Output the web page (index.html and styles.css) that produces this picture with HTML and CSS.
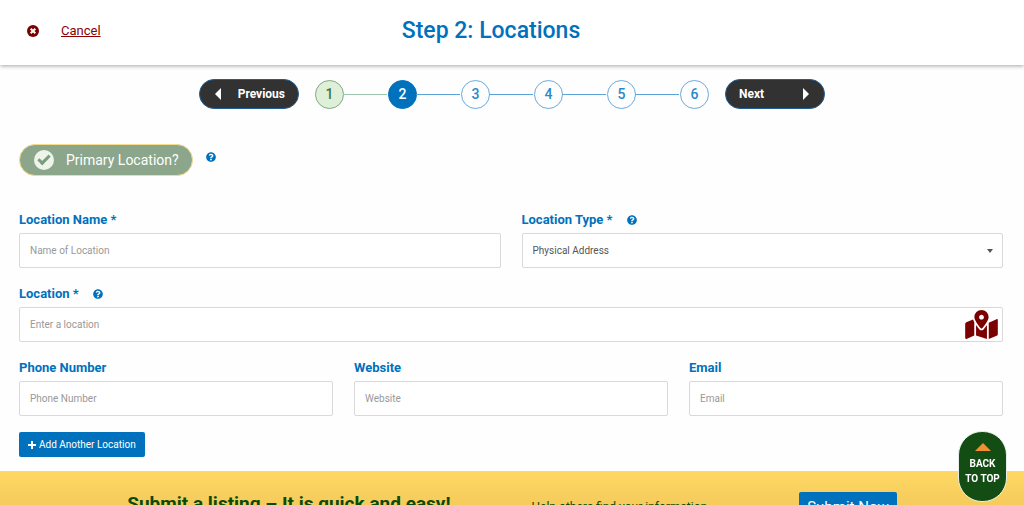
FILE: index.html
```html
<!DOCTYPE html>
<html lang="en">

<head>
    <meta charset="UTF-8">
    <meta name="viewport" content="width=device-width, initial-scale=1.0">
    <title>Step 2: Locations</title>
    <link rel="stylesheet" href="styles.css">
</head>

<body>
    <svg class="sprite" aria-hidden="true">
        <symbol id="icon-help" viewBox="0 0 512 512">
            <path d="M504 256c0 137-111 248-248 248S8 393 8 256 119 8 256 8s248 111 248 248zM262.700 90c-54.500 0-89.300 23-116.500 63.800-3.500 5.300-2.400 12.400 2.700 16.300l34.700 26.300c5.200 3.900 12.600 3 16.700-2.100 17.900-22.700 30.100-35.800 57.300-35.800 20.400 0 45.700 13.100 45.700 33 0 15-12.400 22.700-32.500 34C247 238.500 216 254.900 216 296v4c0 6.600 5.400 12 12 12h56c6.600 0 12-5.400 12-12v-1.300c0-28.500 83.200-29.600 83.200-106.700 0-58-60.200-102-116.500-102zM256 338c-25.400 0-46 20.600-46 46s20.600 46 46 46 46-20.600 46-46-20.600-46-46-46z" />
        </symbol>
    </svg>

    <header class="header">
        <a class="cancel" href="#">
            <svg class="cancel__icon" viewBox="0 0 12 12" aria-hidden="true">
                <circle cx="6" cy="6" r="6" />
                <path d="M3.700 3.700l4.600 4.600M8.300 3.700l-4.600 4.600" />
            </svg>
            <span class="cancel__text">Cancel</span>
        </a>
        <h1 class="header__title">Step 2: Locations</h1>
    </header>

    <nav class="stepper" aria-label="Steps">
        <button class="stepper__button" type="button">
            <svg class="stepper__arrow" viewBox="0 0 6 12" aria-hidden="true"><path d="M6 0v12L0 6z" /></svg>
            Previous
        </button>
        <ol class="steps">
            <li class="step step--done">1</li>
            <li class="step step--active" aria-current="step">2</li>
            <li class="step">3</li>
            <li class="step">4</li>
            <li class="step">5</li>
            <li class="step">6</li>
        </ol>
        <button class="stepper__button" type="button">
            Next
            <svg class="stepper__arrow" viewBox="0 0 6 12" aria-hidden="true"><path d="M0 0v12l6-6z" /></svg>
        </button>
    </nav>

    <main>
        <form class="form">
            <div class="primary">
                <label class="primary__toggle">
                    <input class="primary__check" type="checkbox" checked>
                    Primary Location?
                </label>
                <svg class="help"><use href="#icon-help" /></svg>
            </div>

            <div class="form__row">
                <div class="field">
                    <div class="field__head">
                        <label for="name">Location Name *</label>
                    </div>
                    <input class="field__control" id="name" type="text" placeholder="Name of Location">
                </div>
                <div class="field">
                    <div class="field__head">
                        <label for="type">Location Type *</label>
                        <svg class="help"><use href="#icon-help" /></svg>
                    </div>
                    <div class="field__box">
                        <select class="field__control field__control--select" id="type">
                            <option>Physical Address</option>
                        </select>
                        <span class="field__caret"></span>
                    </div>
                </div>
            </div>

            <div class="form__row">
                <div class="field">
                    <div class="field__head">
                        <label for="location">Location *</label>
                        <svg class="help"><use href="#icon-help" /></svg>
                    </div>
                    <div class="field__box">
                        <input class="field__control" id="location" type="text" placeholder="Enter a location">
                        <svg class="field__map" viewBox="0 0 576 512" aria-hidden="true">
                            <path d="M288 0c-69.600 0-126 56.400-126 126 0 56.300 82.400 158.800 113.900 196 6.400 7.500 17.800 7.500 24.200 0C331.600 284.800 414 182.300 414 126 414 56.400 357.600 0 288 0zm0 168c-23.200 0-42-18.800-42-42s18.800-42 42-42 42 18.800 42 42-18.800 42-42 42zM20.100 216A32 32 0 0 0 0 245.700v250.300c0 11.300 11.400 19.100 21.900 14.900L160 448V214.900c-8.800-16-16.100-31.500-21.300-46.400L20.100 216zM288 359.700c-14.100 0-27.400-6.200-36.500-17-19.700-23.200-40.600-49.600-59.500-76.700v182l192 64V266c-18.900 27.100-39.800 53.500-59.500 76.700-9.100 10.800-22.400 17-36.500 17zM554.100 161.200L416 224v288l139.900-56A32 32 0 0 0 576 426.300V176c0-11.300-11.400-19-21.900-14.800z" />
                        </svg>
                    </div>
                </div>
            </div>

            <div class="form__row">
                <div class="field">
                    <div class="field__head">
                        <label for="phone">Phone Number</label>
                    </div>
                    <input class="field__control" id="phone" type="tel" placeholder="Phone Number">
                </div>
                <div class="field">
                    <div class="field__head">
                        <label for="website">Website</label>
                    </div>
                    <input class="field__control" id="website" type="text" placeholder="Website">
                </div>
                <div class="field">
                    <div class="field__head">
                        <label for="email">Email</label>
                    </div>
                    <input class="field__control" id="email" type="email" placeholder="Email">
                </div>
            </div>

            <button class="add-button" type="button">
                <svg class="add-button__icon" viewBox="0 0 8 8" aria-hidden="true"><path d="M4 0v8M0 4h8" /></svg>
                Add Another Location
            </button>
        </form>
    </main>

    <section class="banner">
        <h2 class="banner__title">Submit a listing – It is quick and easy!</h2>
        <p class="banner__text">Help others find your information</p>
        <a class="banner__button" href="#">Submit Now</a>
    </section>

    <a class="to-top" href="#">
        <svg class="to-top__icon" viewBox="0 0 16 8" aria-hidden="true"><path d="M8 0l8 8H0z" /></svg>
        Back<br>to top
    </a>
</body>

</html>
```
FILE: styles.css
```css
*,
*::before,
*::after {
    margin: 0;
    padding: 0;
    box-sizing: border-box;
}

body {
    font-family: Roboto, "Liberation Sans", sans-serif;
    color: #333;
    background: #fefefe;
}

button,
input,
select {
    font-family: inherit;
}

.sprite {
    display: none;
}

.header {
    display: grid;
    grid-template-columns: 1fr auto 1fr;
    align-items: center;
    height: 65px;
    padding: 0 27px 4px;
    background: #fff;
    box-shadow: 0 1px 4px rgba(0, 0, 0, 0.35);
}

.header__title {
    grid-column: 2;
    padding-right: 42px;
    font-size: 23px;
    font-weight: 500;
    color: #0071bc;
}

.cancel {
    display: flex;
    align-items: center;
    gap: 22px;
    font-size: 13px;
    color: #8b0000;
    text-decoration: none;
}

.cancel__icon {
    width: 12px;
    height: 12px;
    fill: #7b0000;
    stroke-width: 2;
}

.cancel__icon path {
    stroke: #fff;
}

.cancel__text {
    text-decoration: underline;
}

.stepper {
    display: flex;
    justify-content: center;
    align-items: center;
    gap: 16px;
    padding-top: 14px;
}

.stepper__button {
    display: flex;
    justify-content: space-between;
    align-items: center;
    width: 100px;
    height: 30px;
    padding: 0 13px;
    border: 1px solid #205f94;
    border-radius: 15px;
    background: #323232;
    color: #fff;
    font-size: 12px;
    font-weight: 700;
}

.stepper__arrow {
    width: 6px;
    height: 12px;
    fill: #fff;
}

.stepper__button:first-child .stepper__arrow {
    margin-left: 2px;
}

.stepper__button:last-child .stepper__arrow {
    margin-right: 2px;
}

.steps {
    display: flex;
    list-style: none;
    gap: 44px;
}

.step {
    position: relative;
    width: 29px;
    height: 29px;
    border: 1px solid #6aaade;
    border-radius: 50%;
    font-size: 14px;
    font-weight: 500;
    line-height: 27px;
    text-align: center;
    color: #2c87c9;
}

.step:not(:last-child)::after {
    position: absolute;
    content: "";
    top: 13px;
    left: 100%;
    width: 44px;
    height: 1px;
    background: #5ba3d6;
}

.step--done {
    border-color: #83a883;
    background: #dff0d8;
    color: #3c763d;
}

.step--done:not(:last-child)::after {
    background: #9cc4ae;
}

.step--active {
    border-color: #0071bc;
    background: #0071bc;
    color: #fff;
}

.form {
    padding: 35px 21px 14px 19px;
}

.primary {
    display: flex;
    gap: 13px;
    margin-bottom: 37px;
}

.primary .help {
    margin-top: 8px;
}

.primary__toggle {
    display: flex;
    align-items: center;
    gap: 12px;
    height: 32px;
    padding: 0 13px 0 14px;
    border: 1px solid #f3dc8c;
    border-radius: 16px;
    background: #8ba68b;
    color: #fff;
    font-size: 14px;
}

.primary__check {
    position: relative;
    appearance: none;
    width: 20px;
    height: 20px;
    border-radius: 50%;
    background: #edf5ea;
}

.primary__check:checked::before {
    position: absolute;
    content: "";
    top: 5px;
    left: 4px;
    width: 12px;
    height: 7px;
    border: solid #7d9c7d;
    border-width: 0 0 3px 3px;
    transform: rotate(-45deg);
}

.help {
    width: 10px;
    height: 10px;
    fill: #0071bc;
}

.form__row {
    display: flex;
    gap: 21px;
    margin-bottom: 19px;
}

.field {
    flex: 1;
}

.field__head {
    display: flex;
    align-items: center;
    gap: 14px;
    height: 20px;
    font-size: 13px;
    font-weight: 700;
    line-height: 13px;
    padding-bottom: 7px;
    color: #0071bc;
}

.field__box {
    position: relative;
}

.field__control {
    display: block;
    width: 100%;
    height: 35px;
    padding: 0 10px;
    border: 1px solid #d9d9d9;
    border-radius: 2px;
    background: #fff;
    color: #555;
    font-size: 10px;
}

.field__control::placeholder {
    color: #999;
}

.field__control--select {
    appearance: none;
}

.field__caret {
    position: absolute;
    top: 16px;
    right: 10px;
    border: 3px solid transparent;
    border-top: 4px solid #555;
    border-bottom: 0;
    pointer-events: none;
}

.field__map {
    position: absolute;
    top: 3px;
    right: 5px;
    width: 33px;
    height: 29px;
    fill: #7b0000;
}

.add-button {
    display: flex;
    align-items: center;
    gap: 3px;
    height: 25px;
    margin-top: -3px;
    padding: 0 9px;
    border: 0;
    border-radius: 2px;
    background: #0071bc;
    color: #fff;
    font-size: 10px;
}

.add-button__icon {
    width: 8px;
    height: 8px;
    fill: none;
    stroke: #fff;
    stroke-width: 2;
}

.banner {
    display: flex;
    justify-content: center;
    align-items: center;
    height: 72px;
    background: linear-gradient(#ffd863, #f5cb5c 34px);
    color: #0a4a0a;
}

.banner__title {
    padding-bottom: 8px;
    font-size: 19px;
    font-weight: 700;
}

.banner__text {
    margin: 0 92px 0 81px;
    font-size: 12px;
}

.banner__button {
    padding: 6px 8px;
    border-radius: 2px;
    background: #0071bc;
    color: #fff;
    font-size: 15px;
    text-decoration: none;
}

.to-top {
    position: fixed;
    right: 17px;
    bottom: 3px;
    display: flex;
    flex-direction: column;
    align-items: center;
    width: 49px;
    height: 71px;
    padding-top: 11px;
    border: 1px solid #e8efe8;
    border-radius: 24px;
    background: #144d14;
    color: #fff;
    font-size: 10px;
    font-weight: 700;
    line-height: 15px;
    text-align: center;
    text-transform: uppercase;
    text-decoration: none;
}

.to-top__icon {
    width: 16px;
    height: 8px;
    margin-bottom: 5px;
    fill: #f09030;
}
```
